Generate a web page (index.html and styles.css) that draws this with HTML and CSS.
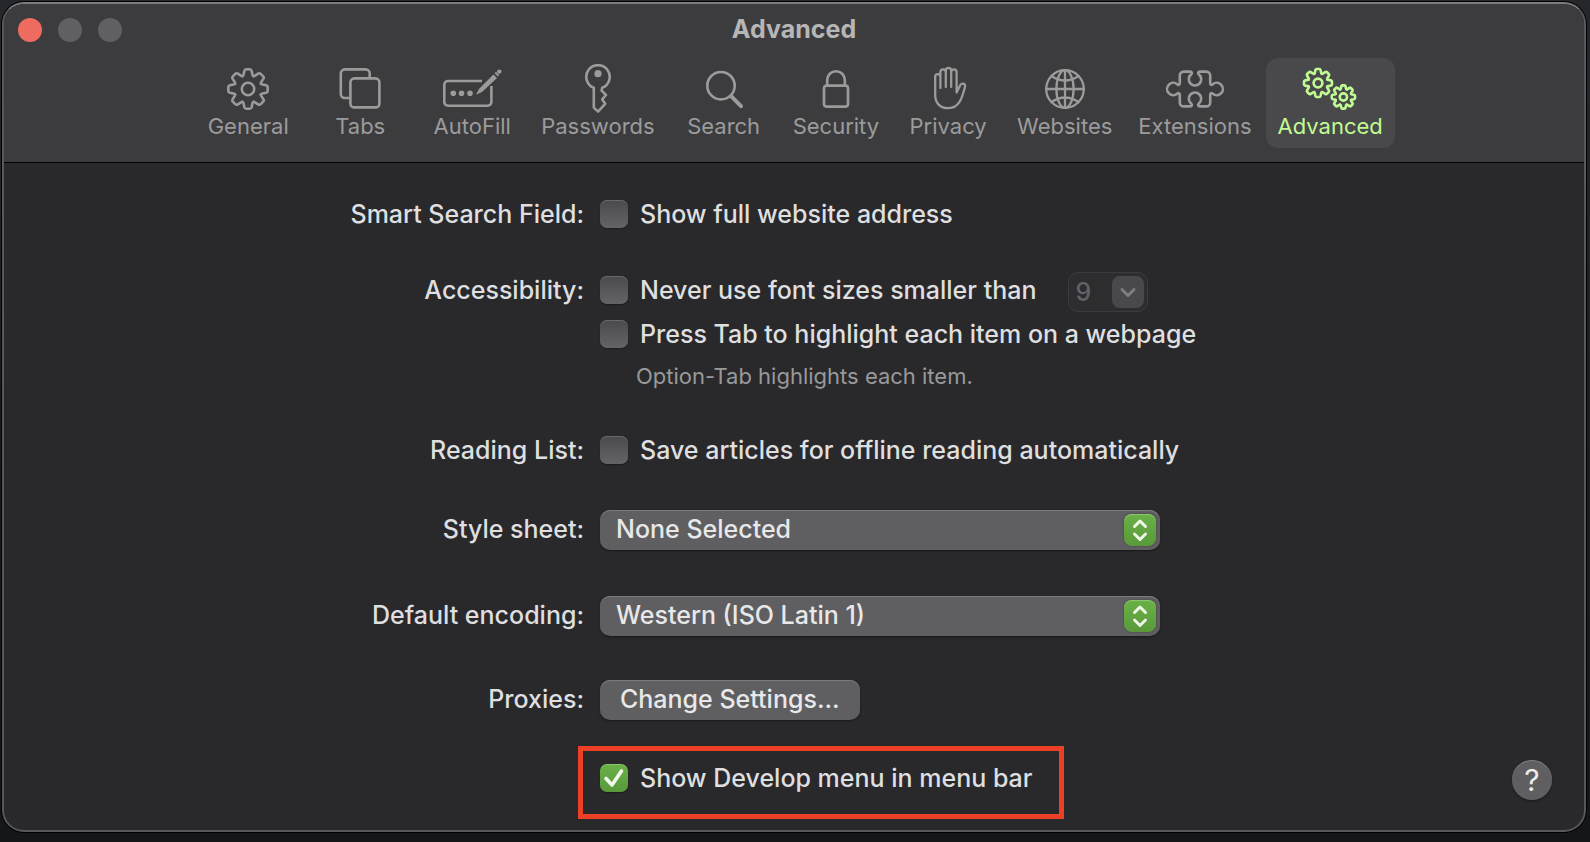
FILE: index.html
```html
<!DOCTYPE html>
<html lang="en">
<head>
<meta charset="utf-8">
<meta name="viewport" content="width=device-width, initial-scale=1">
<title>Advanced</title>
<link rel="stylesheet" href="styles.css">
</head>
<body>
<svg class="defs" aria-hidden="true">
  <defs>
    <path id="tooth" vector-effect="non-scaling-stroke" d="M-5.36-12.93Q-4.7-13.2-4.4-14.5L-3.7-18Q-3.3-19.7-1.8-19.7H1.8Q3.3-19.7 3.7-18L4.4-14.5Q4.7-13.2 5.36-12.93"/>
    <g id="gear">
      <use href="#tooth"/>
      <use href="#tooth" transform="rotate(45)"/>
      <use href="#tooth" transform="rotate(90)"/>
      <use href="#tooth" transform="rotate(135)"/>
      <use href="#tooth" transform="rotate(180)"/>
      <use href="#tooth" transform="rotate(225)"/>
      <use href="#tooth" transform="rotate(270)"/>
      <use href="#tooth" transform="rotate(315)"/>
      <circle r="6.2" vector-effect="non-scaling-stroke"/>
    </g>
  </defs>
</svg>
<div class="window">
  <header class="toolbar">
    <div class="titlebar">
      <div class="lights">
        <button class="light light-close" type="button" aria-label="Close"></button>
        <button class="light" type="button" aria-label="Minimize"></button>
        <button class="light" type="button" aria-label="Zoom"></button>
      </div>
      <h1 class="title">Advanced</h1>
    </div>
    <nav class="tabs" aria-label="Preference panes">
      <button class="tab" type="button">
        <svg class="icon" viewBox="-32 -25 64 50" aria-hidden="true"><use href="#gear"/></svg>
        <span>General</span>
      </button>
      <button class="tab" type="button">
        <svg class="icon" viewBox="-32 -25 64 50" aria-hidden="true"><rect x="-9.6" y="-10.6" width="29" height="29" rx="4"/><path d="M9.7-11.5V-15.6a4 4 0 0 0-4-4H-15.2a4 4 0 0 0-4 4V5a4 4 0 0 0 4 4H-10.5"/></svg>
        <span>Tabs</span>
      </button>
      <button class="tab" type="button">
        <svg class="icon" viewBox="-32 -25 64 50" aria-hidden="true"><path class="butt" d="M10-8H-24a3.7 3.7 0 0 0-3.7 3.7V13a3.7 3.7 0 0 0 3.7 3.7H15.7a3.7 3.7 0 0 0 3.7-3.7V-3"/><g class="solid"><circle cx="-18.7" cy="4.3" r="2.8"/><circle cx="-10.5" cy="4.3" r="2.8"/><circle cx="-2" cy="4.3" r="2.8"/><path d="M4 5.7L7 0L21.4-14.6L25-11L10 3Z"/><path d="M22.6-15.8L24-17.2L27.2-14L26-12.4Z"/><circle cx="27.3" cy="-17.4" r="2.2"/></g></svg>
        <span>AutoFill</span>
      </button>
      <button class="tab" type="button">
        <svg class="icon" viewBox="-32 -25 64 50" aria-hidden="true"><path d="M-4.2-1.2A11.7 11.7 0 1 1 4.2-1.2L3.6 1.6L8 6L4.2 10.4L7.2 14.8L0 22.6L-4.2 18.6Z"/><circle class="solid" cx="0" cy="-15.3" r="3.6"/></svg>
        <span>Passwords</span>
      </button>
      <button class="tab" type="button">
        <svg class="icon" viewBox="-32 -25 64 50" aria-hidden="true"><circle cx="-3" cy="-3.3" r="13.7"/><path class="thick" d="M7.6 7.6L17 17.2"/></svg>
        <span>Search</span>
      </button>
      <button class="tab" type="button">
        <svg class="icon" viewBox="-32 -25 64 50" aria-hidden="true"><rect x="-12" y="-3.4" width="24" height="21" rx="2.5"/><path d="M-8.8-4V-9a8.8 8.8 0 0 1 17.6 0V-4"/></svg>
        <span>Security</span>
      </button>
      <button class="tab" type="button">
        <svg class="icon thin" viewBox="-32 -25 64 50" aria-hidden="true"><path d="M-7.6-1V-12.2a2.6 2.6 0 0 0-5.2 0V6C-12.8 14-8 19.2.5 19.2C12 19.2 14.5 7 17-2.2C17.6-5.5 13.6-6.8 12-3.5L8.6 3.5V-17a2.7 2.7 0 0 0-5.4 0M-7.6-12V-17a2.7 2.7 0 0 1 5.4 0V-2M-2.2-17V-18.5a2.7 2.7 0 0 1 5.4 0V-2"/></svg>
        <span>Privacy</span>
      </button>
      <button class="tab" type="button">
        <svg class="icon thin" viewBox="-32 -25 64 50" aria-hidden="true"><circle r="18.8"/><ellipse rx="8.6" ry="18.8"/><path d="M0-18.8V18.8M-18.8 0H18.8M-13.6-13Q0-4 13.6-13M-13.6 13Q0 4 13.6 13"/></svg>
        <span>Websites</span>
      </button>
      <button class="tab" type="button">
        <svg class="icon" viewBox="-32 -25 64 50" aria-hidden="true"><path d="M-15.2-6V-13.4a4 4 0 0 1 4-4H-5c2 0 2.5 1.5 1.2 2.8A6.2 6.2 0 1 0 3.8-14.6C2.5-15.9 3-17.4 5-17.4H11.2a4 4 0 0 1 4 4V-6c0 2 1.4 2.3 2.6 1.2A6.2 6.2 0 1 1 17.8 4.8C16.6 3.7 15.2 4 15.2 6V13.4a4 4 0 0 1-4 4H5c-2 0-2.5-1.5-1.2-2.8A6.2 6.2 0 1 0-3.8 14.6C-2.5 15.9-3 17.4-5 17.4H-11.2a4 4 0 0 1-4-4V6c0-2-1.4-2.3-2.6-1.2A6.2 6.2 0 1 1-17.8-4.8C-16.6-3.7-15.2-4-15.2-6Z"/></svg>
        <span>Extensions</span>
      </button>
      <button class="tab tab-selected" type="button" aria-current="page">
        <svg class="icon" viewBox="-32 -25 64 50" aria-hidden="true"><use href="#gear" transform="translate(-12 -6) scale(.71)"/><use href="#gear" transform="translate(13.4 8) scale(.59)"/></svg>
        <span>Advanced</span>
      </button>
    </nav>
  </header>

  <main class="content">
    <form class="form">
      <div class="row">
        <span class="name">Smart Search Field:</span>
        <label class="check"><input class="box" type="checkbox">Show full website address</label>
      </div>

      <div class="row row-tall">
        <span class="name">Accessibility:</span>
        <div class="stack">
          <div class="inline">
            <label class="check"><input class="box" type="checkbox">Never use font sizes smaller than</label>
            <div class="combo">
              <input class="combo-field" type="text" value="9" aria-label="Minimum font size" disabled>
              <button class="combo-button" type="button" aria-label="Show sizes" disabled>
                <svg class="chevron" viewBox="0 0 32 32" aria-hidden="true"><path d="M10 13.5L16 19.5L22 13.5"/></svg>
              </button>
            </div>
          </div>
          <label class="check"><input class="box" type="checkbox">Press Tab to highlight each item on a webpage</label>
          <p class="hint">Option-Tab highlights each item.</p>
        </div>
      </div>

      <div class="row">
        <span class="name">Reading List:</span>
        <label class="check"><input class="box" type="checkbox">Save articles for offline reading automatically</label>
      </div>

      <div class="row">
        <label class="name name-control" for="sheet">Style sheet:</label>
        <div class="popup">
          <select class="popup-select" id="sheet"><option>None Selected</option></select>
          <svg class="popup-arrows" viewBox="0 0 32 32" aria-hidden="true"><path d="M10.5 12.5L16 7L21.5 12.5M10.5 20L16 25.5L21.5 20"/></svg>
        </div>
      </div>

      <div class="row">
        <label class="name name-control" for="encoding">Default encoding:</label>
        <div class="popup">
          <select class="popup-select" id="encoding"><option>Western (ISO Latin 1)</option></select>
          <svg class="popup-arrows" viewBox="0 0 32 32" aria-hidden="true"><path d="M10.5 12.5L16 7L21.5 12.5M10.5 20L16 25.5L21.5 20"/></svg>
        </div>
      </div>

      <div class="row row-last">
        <span class="name name-control">Proxies:</span>
        <button class="push" type="button">Change Settings...</button>
        <div class="marked">
          <label class="check"><input class="box" type="checkbox" checked>Show Develop menu in menu bar</label>
        </div>
      </div>
    </form>
    <button class="help" type="button" aria-label="Help">?</button>
  </main>
</div>
</body>
</html>
```
FILE: styles.css
```css
* {
  box-sizing: border-box;
}

body {
  display: flex;
  min-height: 100vh;
  margin: 0;
  padding: 2px 4px 10px 2px;
  background: linear-gradient(#26272c, #1b1c1f 50%, #151618);
  color: #dfdfe0;
  font-family: Inter, "Liberation Sans", sans-serif;
  font-size: 25px;
  font-weight: 500;
  line-height: 28px;
}

button,
input,
select {
  margin: 0;
  padding: 0;
  border: 0;
  color: inherit;
  font: inherit;
}

.defs {
  position: absolute;
  width: 0;
  height: 0;
}

.window {
  display: flex;
  flex: 1;
  flex-direction: column;
  overflow: hidden;
  border: 2px solid #58585a;
  border-top-color: #7c7c7d;
  border-radius: 22px;
  background: #29292b;
  box-shadow: 0 0 0 1px #000;
}

.toolbar {
  padding-bottom: 14px;
  border-bottom: 1px solid #000;
  background: #3c3c3e;
}

.titlebar {
  display: grid;
  grid-template-columns: 1fr auto 1fr;
  align-items: center;
  height: 54px;
  padding: 0 14px 2px;
}

.lights {
  display: flex;
  gap: 16px;
}

.light {
  width: 24px;
  height: 24px;
  border-radius: 50%;
  background: #606062;
}

.light-close {
  background: #ed6b5f;
}

.title {
  margin: 0;
  padding-bottom: 2px;
  color: #b6b6b7;
  font-size: 25px;
  font-weight: 700;
}

.tabs {
  display: flex;
  justify-content: center;
  gap: 2px;
}

.tab {
  display: flex;
  flex-direction: column;
  align-items: center;
  min-width: 110px;
  height: 90px;
  padding: 6px 12px 0;
  border-radius: 12px;
  background: transparent;
  color: #9b9b9c;
  font-size: 22px;
  font-weight: 400;
  line-height: 24px;
}

.tab-selected {
  background: #49494b;
  color: #c0fa93;
}

.icon {
  width: 64px;
  height: 50px;
  fill: none;
  stroke: currentColor;
  stroke-width: 2.6;
  stroke-linecap: round;
  stroke-linejoin: round;
}

.thin {
  stroke-width: 2.3;
}

.thick {
  stroke-width: 4;
}

.butt {
  stroke-linecap: butt;
}

.solid {
  fill: currentColor;
  stroke: none;
}

.content {
  display: grid;
  flex: 1;
  grid-template-columns: 40px 1fr 40px;
  padding: 37px 32px 10px;
}

.form {
  display: flex;
  grid-column: 2;
  flex-direction: column;
  gap: 46px;
  width: 100%;
  max-width: 896px;
  margin: 0 auto;
}

.row {
  display: grid;
  grid-template-columns: 238px 1fr;
  align-items: center;
  column-gap: 16px;
  white-space: nowrap;
}

.row-tall {
  align-items: start;
  margin: 2px 0;
}

.row-last {
  row-gap: 26px;
  margin-top: -2px;
}

.name {
  text-align: right;
}

.name-control {
  padding-bottom: 2px;
}

.check {
  display: flex;
  align-items: center;
  gap: 12px;
}

.box {
  flex: none;
  width: 28px;
  height: 28px;
  border-radius: 7px;
  appearance: none;
  background: linear-gradient(#4a4a4c, #646466);
  box-shadow: inset 0 1px #68686a, 0 1px 1px #1c1c1e;
}

.box:checked {
  background:
    url("data:image/svg+xml,%3Csvg xmlns='http://www.w3.org/2000/svg' viewBox='0 0 28 28'%3E%3Cpath d='M6 14.5L12 21L21.5 7' fill='none' stroke='%23f0f7ec' stroke-width='3.6' stroke-linecap='round' stroke-linejoin='round'/%3E%3C/svg%3E"),
    linear-gradient(#6ab146, #59993b);
  box-shadow: inset 0 1px #8cc56f, 0 1px 1px #1c1c1e;
}

.stack {
  display: flex;
  flex-direction: column;
  gap: 16px;
}

.inline {
  display: flex;
  gap: 32px;
}

.combo {
  display: flex;
  align-items: center;
  width: 80px;
  height: 40px;
  margin: -4px 0 -8px;
  padding: 0 3px 0 6px;
  border: 1px solid #3b3b3d;
  border-radius: 10px;
  background: #2d2d2f;
}

.combo-field {
  flex: 1;
  min-width: 0;
  background: transparent;
  color: #626264;
}

.combo-button {
  width: 32px;
  height: 32px;
  border-radius: 8px;
  background: #49494b;
}

.chevron {
  display: block;
  fill: none;
  stroke: #7e7e80;
  stroke-width: 3;
  stroke-linecap: round;
  stroke-linejoin: round;
}

.hint {
  margin: 0 0 0 36px;
  color: #99999b;
  font-size: 22px;
  font-weight: 400;
  line-height: 24px;
}

.popup {
  position: relative;
  max-width: 560px;
}

.popup-select {
  display: block;
  width: 100%;
  height: 40px;
  padding: 0 48px 2px 16px;
  border-radius: 10px;
  appearance: none;
  background: #5f5f61;
  box-shadow: inset 0 1px #7c7c7e, 0 1px 2px #18181a;
  color: #e8e8e9;
}

.popup-arrows {
  position: absolute;
  top: 4px;
  right: 4px;
  width: 32px;
  height: 32px;
  border-radius: 8px;
  background: linear-gradient(#6ab146, #59993b);
  box-shadow: inset 0 1px #8cc56f, 0 0 2px #3c3c3e;
  fill: none;
  stroke: #eef6ea;
  stroke-width: 3;
  stroke-linecap: round;
  stroke-linejoin: round;
  pointer-events: none;
}

.push {
  justify-self: start;
  height: 40px;
  padding: 0 20px 2px;
  border-radius: 10px;
  background: #5f5f61;
  box-shadow: inset 0 1px #7c7c7e, 0 1px 2px #18181a;
  color: #e8e8e9;
}

.marked {
  grid-column: 2;
  justify-self: start;
  margin-left: -22px;
  padding: 13px 27px 22px 17px;
  border: 5px solid #ed4026;
}

.help {
  grid-column: 3;
  align-self: end;
  width: 40px;
  height: 40px;
  margin-bottom: 20px;
  border-radius: 50%;
  background: #5f5f61;
  box-shadow: inset 0 1px #7c7c7e, 0 1px 2px #18181a;
  color: #ececed;
  font-size: 30px;
  font-weight: 400;
}
```
